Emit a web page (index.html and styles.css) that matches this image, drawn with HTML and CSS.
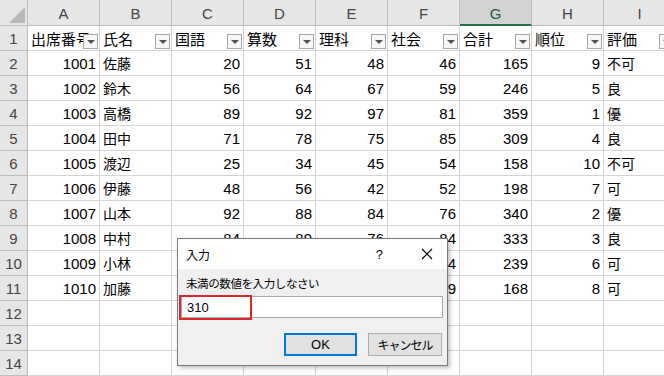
FILE: index.html
```html
<!DOCTYPE html>
<html lang="ja">
<head>
    <meta charset="UTF-8">
    <meta name="viewport" content="width=device-width, initial-scale=1.0">
    <title>入力</title>
    <link rel="stylesheet" href="styles.css">
</head>
<body>
    <div class="sheet" id="sheet">
        <!-- Cells are generated below -->
    </div>

    <!-- InputBox dialog -->
    <div class="dialog">
        <div class="dialog-title">
            <span class="dialog-caption">入力</span>
            <span class="dialog-help">?</span>
            <svg class="dialog-close" width="12" height="12" viewBox="0 0 12 12">
                <path d="M1 1L11 11M11 1L1 11" stroke="#000" stroke-width="1.1" fill="none"/>
            </svg>
        </div>
        <div class="dialog-body">
            <div class="dialog-label">未満の数値を入力しなさい</div>
            <div class="dialog-input">310</div>
            <div class="mark"></div>
            <div class="dialog-buttons">
                <button class="btn btn-ok">OK</button>
                <button class="btn">キャンセル</button>
            </div>
        </div>
    </div>

    <script>
        const columns = ["A", "B", "C", "D", "E", "F", "G", "H", "I"];
        const titles = ["出席番号", "氏名", "国語", "算数", "理科", "社会", "合計", "順位", "評価"];
        // cells hidden behind the dialog are left blank
        const rows = [
            [1001, "佐藤", 20, 51, 48, 46, 165, 9, "不可"],
            [1002, "鈴木", 56, 64, 67, 59, 246, 5, "良"],
            [1003, "高橋", 89, 92, 97, 81, 359, 1, "優"],
            [1004, "田中", 71, 78, 75, 85, 309, 4, "良"],
            [1005, "渡辺", 25, 34, 45, 54, 158, 10, "不可"],
            [1006, "伊藤", 48, 56, 42, 52, 198, 7, "可"],
            [1007, "山本", 92, 88, 84, 76, 340, 2, "優"],
            [1008, "中村", 84, 89, 76, 84, 333, 3, "良"],
            [1009, "小林", "", "", "", 64, 239, 6, "可"],
            [1010, "加藤", "", "", "", 49, 168, 8, "可"]
        ];

        const corner = `<div class="corner"><svg width="16" height="16" viewBox="0 0 16 16"><polygon points="16,0 16,16 0,16" fill="#b9b9b9"/></svg></div>`;
        let html = corner + columns
            .map((c) => `<div class="colhead${c === "G" ? " active" : ""}">${c}</div>`)
            .join("");

        html += `<div class="rowhead">1</div>` + titles
            .map((t) => `<div class="cell title">${t}<span class="filter"></span></div>`)
            .join("");

        rows.forEach((r, i) => {
            html += `<div class="rowhead">${i + 2}</div>` + r
                .map((v) => `<div class="cell${typeof v === "number" ? " num" : ""}">${v}</div>`)
                .join("");
        });

        for (let n = 12; n <= 14; n++) {
            html += `<div class="rowhead">${n}</div>` + columns.map(() => `<div class="cell"></div>`).join("");
        }

        document.getElementById("sheet").innerHTML = html;
    </script>
</body>
</html>
```

FILE: styles.css
```css
body {
    margin: 0;
    padding: 0;
    width: 664px;
    height: 376px;
    overflow: hidden;
    position: relative;
    background-color: #fff;
    font-family: "Noto Sans CJK JP", "Noto Sans", sans-serif;
    color: #000;
}
.sheet {
    display: grid;
    grid-template-columns: 28px repeat(9, 72px);
    grid-template-rows: 26px;
    grid-auto-rows: 25px;
    width: 676px;
}
.sheet > div {
    box-sizing: border-box;
    border-right: 1px solid #d4d4d4;
    border-bottom: 1px solid #d4d4d4;
    display: flex;
    align-items: center;
    white-space: nowrap;
    overflow: hidden;
    font-size: 14px;
}
.corner {
    background-color: #e6e6e6;
    justify-content: flex-end;
    align-items: flex-end !important;
    padding: 0 2px 2px 0;
    border-color: #bdbdbd !important;
}
.colhead {
    background-color: #e6e6e6;
    color: #444;
    justify-content: center;
    font-family: "Liberation Sans", sans-serif;
    font-size: 15px !important;
    border-color: #bdbdbd !important;
    padding-top: 2px;
}
.colhead.active {
    background-color: #d2d2d2;
    color: #1e5b3a;
    border-bottom: 2px solid #217346 !important;
}
.rowhead {
    background-color: #e6e6e6;
    color: #444;
    justify-content: center;
    font-family: "Liberation Sans", sans-serif;
    font-size: 15px !important;
    border-color: #bdbdbd !important;
}
.cell {
    padding: 0 3px;
}
.cell.num {
    justify-content: flex-end;
    font-family: "Liberation Sans", sans-serif;
    font-size: 15px !important;
}
.cell.title {
    position: relative;
    font-size: 15px !important;
}
.filter {
    position: absolute;
    right: 1px;
    bottom: 1px;
    width: 15px;
    height: 15px;
    box-sizing: border-box;
    border: 1px solid #a6a6a6;
    background-color: #f7f7f7;
}
.filter::after {
    content: "";
    position: absolute;
    left: 3px;
    top: 5px;
    border-left: 4px solid transparent;
    border-right: 4px solid transparent;
    border-top: 4px solid #555;
}

/* Dialog */
.dialog {
    position: absolute;
    left: 177px;
    top: 238px;
    width: 271px;
    height: 128px;
    box-sizing: border-box;
    border: 1px solid #7a7a7a;
    background-color: #f0f0f0;
    box-shadow: 2px 2px 4px rgba(0, 0, 0, 0.25);
    display: flex;
    flex-direction: column;
}
.dialog-title {
    height: 30px;
    background-color: #fff;
    display: flex;
    align-items: center;
    font-size: 12px;
    padding: 0 14px 0 8px;
}
.dialog-help {
    margin-left: auto;
    margin-right: 38px;
    font-family: "Liberation Sans", sans-serif;
    font-size: 13px;
}
.dialog-body {
    position: relative;
    padding: 6px 4px 0 2px;
    display: flex;
    flex-direction: column;
}
.dialog-label {
    font-size: 11.5px;
    letter-spacing: -0.4px;
    line-height: 17px;
    padding-left: 6px;
}
.dialog-input {
    margin-top: 4px;
    height: 22px;
    box-sizing: border-box;
    border: 1px solid #a9a9a9;
    background-color: #fff;
    font-family: "Liberation Sans", sans-serif;
    font-size: 13px;
    display: flex;
    align-items: center;
    padding-left: 5px;
    margin-left: 1px;
}
.mark {
    position: absolute;
    left: 1px;
    top: 26px;
    width: 73px;
    height: 25px;
    box-sizing: border-box;
    border: 2px solid #e0262d;
}
.dialog-buttons {
    display: flex;
    justify-content: flex-end;
    gap: 11px;
    margin-top: 15px;
    padding-right: 1px;
}
.btn {
    width: 74px;
    height: 23px;
    box-sizing: border-box;
    border: 1px solid #adadad;
    background-color: #e1e1e1;
    font-family: "Noto Sans CJK JP", sans-serif;
    font-size: 12px;
    letter-spacing: -1px;
    padding: 0;
    color: #000;
}
.btn-ok {
    border: 2px solid #0078d7;
    width: 73px;
    letter-spacing: 0;
    font-family: "Liberation Sans", sans-serif;
    font-size: 13px;
}
```
